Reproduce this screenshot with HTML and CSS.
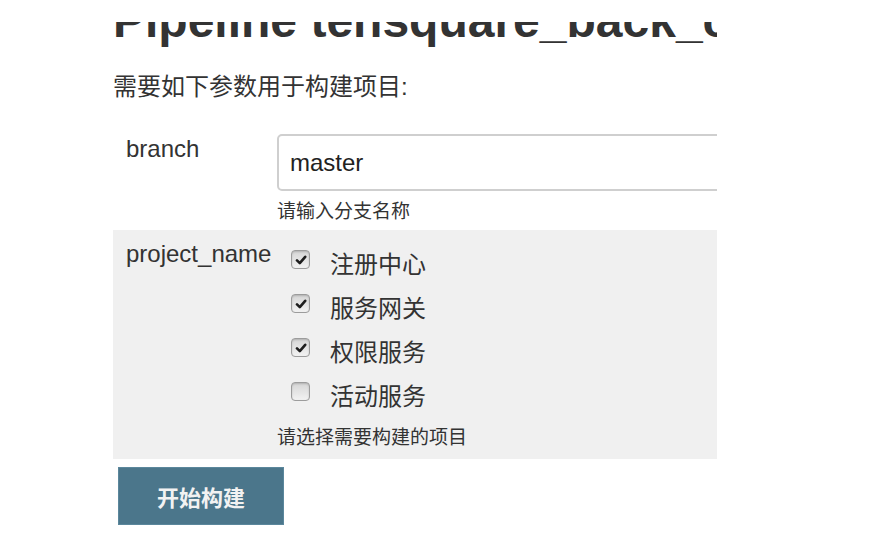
FILE: index.html
```html
<!DOCTYPE html>
<html lang="zh">
<head>
<meta charset="utf-8">
<title>Pipeline tensquare_back_cloud</title>
<link rel="stylesheet" href="styles.css">
</head>
<body>
<div class="page">
  <div class="title-clip">
    <h1 class="title">Pipeline tensquare_back_cloud</h1>
  </div>
  <p class="intro">需要如下参数用于构建项目:</p>
  <div class="params">
    <div class="param param-first">
      <div class="param-name">branch</div>
      <div class="param-value">
        <div class="text-input">master</div>
        <div class="help">请输入分支名称</div>
      </div>
    </div>
    <div class="param param-alt">
      <div class="param-name param-name-low">project_name</div>
      <div class="param-value">
        <div class="choice">
          <span class="cb"><svg viewBox="0 0 12 12" width="12" height="12"><path d="M2 6.4 L4.8 9.2 L10.2 2.8" fill="none" stroke="#1e1e1e" stroke-width="2.6" stroke-linecap="round" stroke-linejoin="round"/></svg></span>
          <span class="choice-label">注册中心</span>
        </div>
        <div class="choice">
          <span class="cb"><svg viewBox="0 0 12 12" width="12" height="12"><path d="M2 6.4 L4.8 9.2 L10.2 2.8" fill="none" stroke="#1e1e1e" stroke-width="2.6" stroke-linecap="round" stroke-linejoin="round"/></svg></span>
          <span class="choice-label">服务网关</span>
        </div>
        <div class="choice">
          <span class="cb"><svg viewBox="0 0 12 12" width="12" height="12"><path d="M2 6.4 L4.8 9.2 L10.2 2.8" fill="none" stroke="#1e1e1e" stroke-width="2.6" stroke-linecap="round" stroke-linejoin="round"/></svg></span>
          <span class="choice-label">权限服务</span>
        </div>
        <div class="choice">
          <span class="cb"></span>
          <span class="choice-label">活动服务</span>
        </div>
        <div class="help help-last">请选择需要构建的项目</div>
      </div>
    </div>
  </div>
  <button class="build-btn" type="button">开始构建</button>
</div>
</body>
</html>
```
FILE: styles.css
```css
html, body {
  margin: 0;
  padding: 0;
  background: #ffffff;
}

body {
  font-family: "Liberation Sans", Arial, "Noto Sans CJK SC", sans-serif;
  color: #333333;
}

.page {
  margin-left: 113px;
  width: 604px;
  overflow: hidden;
}

.title-clip {
  margin-top: 22px;
  height: 28px;
  overflow: hidden;
}

.title {
  margin: -25px 0 0 0;
  font-size: 48px;
  line-height: 48px;
  font-weight: bold;
  white-space: nowrap;
  color: #333333;
}

.intro {
  margin: 22px 0 0 0;
  font-size: 24px;
  line-height: 30px;
}

.params {
  margin-top: 26px;
}

.param {
  display: flex;
  padding: 6px 0 9px 0;
}

.param-first {
  padding-bottom: 6px;
}

.param-alt {
  background: #f0f0f0;
}

.param-name {
  width: 151px;
  padding-left: 13px;
  font-size: 24px;
  line-height: 30px;
  flex: none;
}

.param-name-low {
  padding-top: 3px;
}

.param-value {
  flex: 1;
  min-width: 0;
}

.text-input {
  box-sizing: border-box;
  width: 500px;
  height: 57px;
  border: 2px solid #cfcfcf;
  border-radius: 5px;
  padding: 0 11px;
  font-size: 24px;
  line-height: 53px;
  color: #222222;
  background: #ffffff;
}

.help {
  margin-top: 9px;
  font-size: 19px;
  line-height: 24px;
  color: #333333;
}

.help-last {
  margin-top: 7px;
}

.choice {
  display: flex;
  align-items: flex-start;
  height: 44px;
}

.choice:first-child {
  margin-top: 7px;
}

.cb {
  box-sizing: border-box;
  width: 19px;
  height: 19px;
  margin: 7px 0 0 14px;
  border: 1px solid #9c9c9c;
  border-radius: 4px;
  background: linear-gradient(#d6d6d6, #f2f2f2);
  box-shadow: inset 0 1px 2px rgba(0, 0, 0, 0.18);
  display: flex;
  align-items: center;
  justify-content: center;
  flex: none;
}

.cb svg {
  display: block;
}

.choice-label {
  margin-left: 20px;
  font-size: 24px;
  line-height: 44px;
  color: #333333;
}

.build-btn {
  display: block;
  margin: 8px 0 20px 5px;
  width: 166px;
  height: 58px;
  border: 1px solid #5b879c;
  background: #4b768b;
  color: #f2f2f2;
  font-family: "Liberation Sans", Arial, "Noto Sans CJK SC", sans-serif;
  font-size: 22px;
  font-weight: bold;
  padding: 0;
  cursor: pointer;
}
```
